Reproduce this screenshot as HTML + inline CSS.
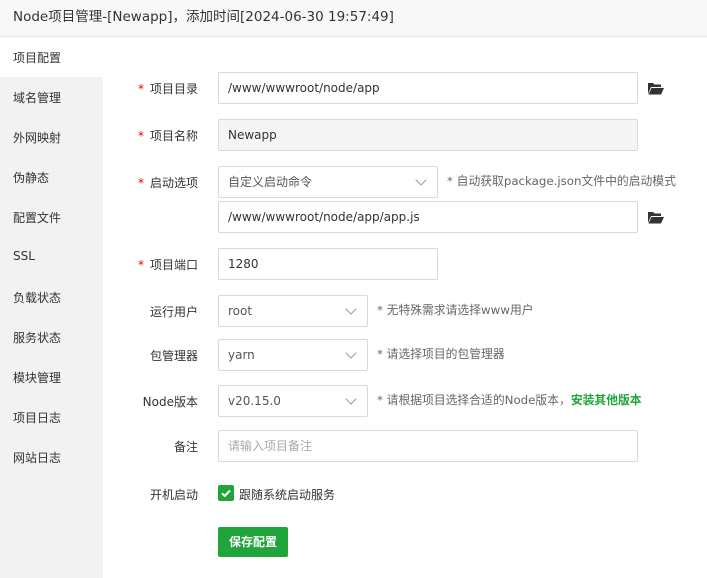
<!DOCTYPE html><html><head><meta charset="utf-8"><style>
*{box-sizing:border-box;margin:0;padding:0}
body{width:707px;height:578px;overflow:hidden;background:#fff;font-family:"DejaVu Sans","Noto Sans CJK SC",sans-serif;font-size:12px;color:#333;position:relative}
.hd{position:absolute;left:0;top:0;width:707px;height:37px;background:#f8f8f8;border-bottom:1px solid #e6e6e6;font-size:13.5px;line-height:34px;padding-left:13px;color:#333}
.sb{position:absolute;left:0;top:77px;width:103px;height:501px;background:#f2f2f2}
.it{position:absolute;left:13px;font-size:12px;color:#333}
.lb{position:absolute;width:198px;left:0;text-align:right;font-size:12px;color:#333}
.lb b{color:#ef0000;font-weight:normal;margin-right:6px}
.in{position:absolute;left:218px;height:32px;border:1px solid #d9d9d9;border-radius:2px;line-height:30px;padding-left:9px;font-size:12px;color:#333;background:#fff}
.sel:after{content:"";position:absolute;right:12px;top:9px;width:7px;height:7px;border-right:1px solid #999;border-bottom:1px solid #999;transform:rotate(45deg)}
.sel{color:#555}
.hint{position:absolute;font-size:11.8px;color:#666}
.fd{position:absolute;left:648px}
</style></head><body>
<div class="hd">Node项目管理-[Newapp]，添加时间[2024-06-30 19:57:49]</div>
<div class="sb"></div>
<div class="it" style="top:49px">项目配置</div>
<div class="it" style="top:89px">域名管理</div>
<div class="it" style="top:129px">外网映射</div>
<div class="it" style="top:169px">伪静态</div>
<div class="it" style="top:209px">配置文件</div>
<div class="it" style="top:249px">SSL</div>
<div class="it" style="top:289px">负载状态</div>
<div class="it" style="top:329px">服务状态</div>
<div class="it" style="top:369px">模块管理</div>
<div class="it" style="top:409px">项目日志</div>
<div class="it" style="top:449px">网站日志</div>

<div class="lb" style="top:80px"><b>*</b>项目目录</div>
<div class="in" style="top:72px;width:420px">/www/wwwroot/node/app</div>
<svg class="fd" style="top:82px" width="16" height="13" viewBox="0 0 16 13"><path d="M0 1h5l1.5 1.5H13V5H3L0 12z M3.5 6H16l-3 6.5H0.5z" fill="#333"/></svg>
<div class="lb" style="top:127px"><b>*</b>项目名称</div>
<div class="in" style="top:119px;width:420px;background:#f5f5f5">Newapp</div>
<div class="lb" style="top:174px"><b>*</b>启动选项</div>
<div class="in sel" style="top:166px;width:220px">自定义启动命令</div>
<div class="hint" style="left:447px;top:172px">* 自动获取package.json文件中的启动模式</div>
<div class="in" style="top:201px;width:420px">/www/wwwroot/node/app/app.js</div>
<svg class="fd" style="top:211px" width="16" height="13" viewBox="0 0 16 13"><path d="M0 1h5l1.5 1.5H13V5H3L0 12z M3.5 6H16l-3 6.5H0.5z" fill="#333"/></svg>
<div class="lb" style="top:256px"><b>*</b>项目端口</div>
<div class="in" style="top:248px;width:220px">1280</div>
<div class="lb" style="top:303px">运行用户</div>
<div class="in sel" style="top:295px;width:150px">root</div>
<div class="hint" style="left:377px;top:301px">* 无特殊需求请选择www用户</div>
<div class="lb" style="top:347px">包管理器</div>
<div class="in sel" style="top:339px;width:150px">yarn</div>
<div class="hint" style="left:377px;top:345px">* 请选择项目的包管理器</div>
<div class="lb" style="top:393px">Node版本</div>
<div class="in sel" style="top:385px;width:150px">v20.15.0</div>
<div class="hint" style="left:377px;top:391px">* 请根据项目选择合适的Node版本，<span style="color:#20a53a;font-weight:bold">安装其他版本</span></div>
<div class="lb" style="top:438px">备注</div>
<div class="in" style="top:430px;width:420px;color:#aaa">请输入项目备注</div>
<div class="lb" style="top:486px">开机启动</div>
<div style="position:absolute;left:218px;top:485px;width:16px;height:16px;background:#20a53a;border-radius:2px"><svg width="16" height="16"><path d="M4 8.3l2.7 2.7L12 5.5" stroke="#fff" stroke-width="2" fill="none"/></svg></div>
<div style="position:absolute;left:239px;top:486px;font-size:12px">跟随系统启动服务</div>
<div style="position:absolute;left:218px;top:527px;width:70px;height:30px;background:#20a53a;border-radius:2px;color:#fff;font-weight:bold;text-align:center;line-height:30px;font-size:12px">保存配置</div>
</body></html>
